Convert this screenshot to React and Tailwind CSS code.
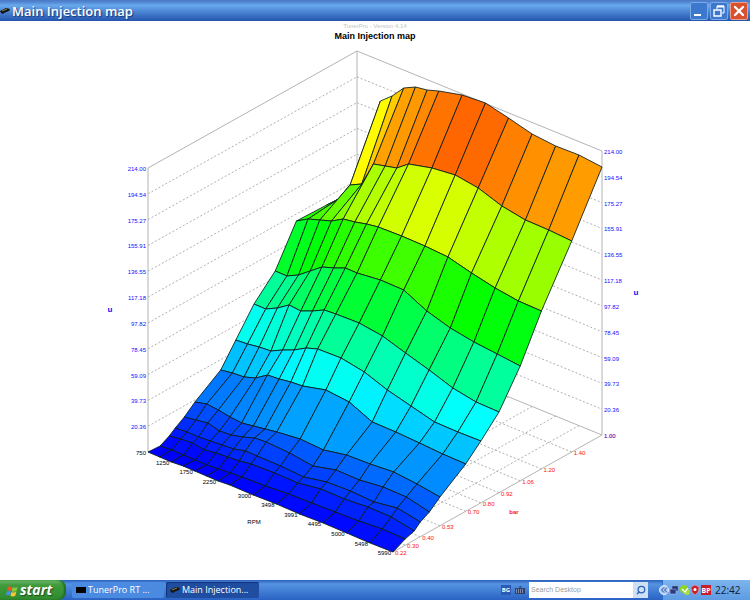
import { Search, X } from 'lucide-react'

const ORIGIN = { x: 148, y: 452 }
const RPM_AXIS = { x: 245, y: 100 }
const BAR_AXIS = { x: 209, y: -117 }
const Z_HEIGHT = 284

const RPM = [750, 1000, 1250, 1500, 1750, 2000, 2250, 2500, 3000, 3498, 3991, 4495, 5000, 5498, 5990]
const BAR = [0.22, 0.3, 0.36, 0.4, 0.46, 0.53, 0.7, 0.8, 0.92, 1.06, 1.2, 1.4, 1.6]

const RPM_LABELS = [750, 1250, 1750, 2250, 3000, 3498, 3991, 4495, 5000, 5498, 5990]
const BAR_LABELS = [0.22, 0.3, 0.4, 0.53, 0.7, 0.8, 0.92, 1.06, 1.2, 1.4, 1.6]
const Z_LABELS = ['1.00', '20.36', '39.73', '59.09', '78.45', '97.82', '117.18', '136.55', '155.91', '175.27', '194.54', '214.00']

// canvas y of every surface point, one row per BAR entry, one column per RPM entry
const SURFACE = [
  [452, 457, 462, 466, 471, 476, 481, 485, 495, 504, 514, 523, 533, 543, 552],
  [446, 450, 455, 460, 465, 469, 473, 477, 486, 494, 503, 512, 521, 529, 539],
  [436, 439, 443, 450, 453, 457, 461, 464, 473, 483, 489, 499, 507, 517, 531],
  [428, 432, 437, 441, 445, 449, 451, 456, 466, 477, 482, 491, 502, 508, 522],
  [417, 420, 423, 431, 435, 437, 438, 442, 453, 466, 470, 480, 487, 497, 512],
  [402, 404, 410, 417, 423, 426, 429, 432, 439, 450, 455, 464, 472, 484, 497],
  [370, 373, 377, 378, 375, 379, 382, 386, 390, 402, 422, 432, 443, 454, 464],
  [340, 344, 347, 351, 350, 350, 348, 349, 358, 372, 390, 406, 422, 432, 441],
  [304, 309, 308, 305, 311, 311, 310, 314, 323, 336, 353, 370, 388, 402, 412],
  [271, 276, 275, 271, 267, 268, 268, 273, 280, 290, 311, 328, 342, 354, 366],
  [221, 219, 220, 221, 219, 222, 224, 227, 236, 246, 257, 273, 288, 301, 311],
  [205, 199, 185, 184, 164, 166, 168, 164, 168, 175, 188, 206, 220, 230, 241],
  [195, 188, 101, 96, 88, 87, 90, 91, 95, 103, 118, 134, 146, 155, 167],
]

const rpmPart = (rpm) => (rpm - 750) / 5240
const barPart = (bar) => (bar - 0.22) / 1.38

function project(r, b, z = 0) {
  return {
    x: ORIGIN.x + RPM_AXIS.x * r + BAR_AXIS.x * b,
    y: ORIGIN.y + RPM_AXIS.y * r + BAR_AXIS.y * b - Z_HEIGHT * z,
  }
}

function surfacePoint(row, col) {
  const floor = project(rpmPart(RPM[col]), barPart(BAR[row]))
  const y = SURFACE[row][col]
  return { x: floor.x, y, z: (floor.y - y) / Z_HEIGHT }
}

function buildCells() {
  const cells = []
  for (let row = BAR.length - 2; row >= 0; row--) {
    for (let col = 0; col < RPM.length - 1; col++) {
      const corners = [
        surfacePoint(row, col),
        surfacePoint(row, col + 1),
        surfacePoint(row + 1, col + 1),
        surfacePoint(row + 1, col),
      ]
      const z = corners.reduce((sum, p) => sum + p.z, 0) / 4
      cells.push({
        key: `${row}-${col}`,
        points: corners.map((p) => `${p.x},${p.y}`).join(' '),
        fill: `hsl(${Math.round(240 * (1 - z))} 100% 50%)`,
      })
    }
  }
  return cells
}

const CELLS = buildCells()

function Segment({ from, to, dashed }) {
  return (
    <line
      x1={from.x}
      y1={from.y}
      x2={to.x}
      y2={to.y}
      stroke={dashed ? '#b0b0b0' : '#b4b4b4'}
      strokeWidth="1"
      strokeDasharray={dashed ? '2 2' : undefined}
    />
  )
}

function Frame() {
  return (
    <g>
      {Z_LABELS.slice(1, -1).map((label, i) => {
        const z = (i + 1) / 11
        return (
          <g key={label}>
            <Segment dashed from={project(0, 0, z)} to={project(0, 1, z)} />
            <Segment dashed from={project(0, 1, z)} to={project(1, 1, z)} />
          </g>
        )
      })}
      {BAR_LABELS.slice(1, -1).map((bar) => (
        <Segment key={bar} dashed from={project(1, barPart(bar))} to={project(0, barPart(bar))} />
      ))}
      {RPM_LABELS.slice(1, -1).map((rpm) => (
        <Segment key={rpm} dashed from={project(rpmPart(rpm), 1)} to={project(rpmPart(rpm), 0)} />
      ))}
      <Segment from={project(0, 0)} to={project(0, 0, 1)} />
      <Segment from={project(0, 1)} to={project(0, 1, 1)} />
      <Segment from={project(1, 1)} to={project(1, 1, 1)} />
      <Segment from={project(0, 0, 1)} to={project(0, 1, 1)} />
      <Segment from={project(0, 1, 1)} to={project(1, 1, 1)} />
      <Segment from={project(0, 1)} to={project(1, 1)} />
      <Segment from={project(1, 0)} to={project(1, 1)} />
    </g>
  )
}

function AxisLabels() {
  return (
    <g className="text-[6px]">
      <g className="fill-[#1010ff]">
        {Z_LABELS.map((label, i) => {
          const left = project(0, 0, i / 11)
          const right = project(1, 1, i / 11)
          return (
            <g key={label}>
              {i > 0 ? (
                <text x={left.x - 2} y={left.y + 3} textAnchor="end">{label}</text>
              ) : null}
              <text x={right.x + 2} y={right.y + 3}>{label}</text>
            </g>
          )
        })}
        <text x="110" y="312" textAnchor="middle" className="text-[8px] font-bold">u</text>
        <text x="636" y="295" textAnchor="middle" className="text-[8px] font-bold">u</text>
      </g>
      <g className="fill-black">
        {RPM_LABELS.map((rpm) => {
          const p = project(rpmPart(rpm), 0)
          return (
            <text key={rpm} x={p.x - 2} y={p.y + 3} textAnchor="end">{rpm}</text>
          )
        })}
        <text x="254" y="524" textAnchor="middle">RPM</text>
      </g>
      <g className="fill-[#ff1010]">
        {BAR_LABELS.map((bar) => {
          const p = project(1, barPart(bar))
          return (
            <text key={bar} x={p.x + 2} y={p.y + 3} className={bar === 1.6 ? 'opacity-50' : ''}>
              {bar.toFixed(2)}
            </text>
          )
        })}
        <text x="514" y="514" textAnchor="middle" className="font-bold">bar</text>
      </g>
    </g>
  )
}

function SurfaceChart() {
  return (
    <svg
      viewBox="0 21 750 559"
      className="block h-full w-full font-['Liberation_Sans',Arial,sans-serif]"
      role="img"
      aria-label="Main Injection map surface"
    >
      <text x="375" y="28" textAnchor="middle" className="fill-[#c4c4c4] text-[6px]">
        TunerPro - Version 4.14
      </text>
      <text x="375" y="39" textAnchor="middle" className="fill-black text-[9px] font-bold">
        Main Injection map
      </text>
      <Frame />
      <g stroke="#0a1a1a" strokeOpacity="0.85" strokeWidth="1" strokeLinejoin="round">
        {CELLS.map((cell) => (
          <polygon key={cell.key} points={cell.points} fill={cell.fill} />
        ))}
      </g>
      <AxisLabels />
    </svg>
  )
}

function ChipIcon() {
  return (
    <svg viewBox="0 0 10 8" className="h-2 w-2.5 shrink-0" aria-hidden="true">
      <path d="M0 4 L6 1 L10 2 L9 4 L4 6 L3 7 L1 6 Z" fill="#17150f" />
      <path d="M2 4 L7 2" stroke="#a89a6a" strokeWidth="0.8" />
    </svg>
  )
}

function TitleBar() {
  return (
    <header className="flex h-[21px] shrink-0 items-center gap-0.5 bg-linear-to-b from-[#4c7cc9] from-5% via-[#68a8ec] via-25% to-[#2554ae] pr-0.5">
      <ChipIcon />
      <h1 className="flex-1 truncate text-[13px] leading-5 font-semibold text-white [text-shadow:1px_1px_1px_#17397c]">
        Main Injection map
      </h1>
      <div className="flex gap-0.5">
        <button type="button" aria-label="Minimize" className="flex h-[18px] w-[18px] items-end rounded-xs border border-[#79a9e6] bg-[#3c78cd] p-[3px]">
          <span className="block h-0.5 w-[7px] bg-white" />
        </button>
        <button type="button" aria-label="Restore" className="flex h-[18px] w-[18px] items-center justify-center rounded-xs border border-[#79a9e6] bg-[#3c78cd]">
          <svg viewBox="0 0 12 12" className="h-3 w-3" fill="none" stroke="#fff" aria-hidden="true">
            <path d="M4 4V1H11V8H9" strokeWidth="1" />
            <path d="M4 1.5H11" strokeWidth="2" />
            <path d="M1 5H8V11H1Z" strokeWidth="1.4" />
          </svg>
        </button>
        <button type="button" aria-label="Close" className="flex h-[18px] w-[18px] items-center justify-center rounded-xs border border-[#e9a08c] bg-[#d9512f]">
          <X className="h-4 w-4 text-white" strokeWidth={3.5} />
        </button>
      </div>
    </header>
  )
}

function StartButton() {
  return (
    <button
      type="button"
      className="flex h-full w-[66px] items-center gap-0.5 rounded-r-lg bg-linear-to-b from-[#6fb96a] via-[#3f9b3c] via-25% to-[#2f8a2e] pl-1.5 shadow-[inset_-2px_0_2px_#1f6b22]"
    >
      <svg viewBox="0 0 12 12" className="mt-0.5 h-3 w-3" aria-hidden="true">
        <path d="M2 2Q4 0.5 6 2L5 6Q3 4.7 1 6Z" fill="#e8562a" />
        <path d="M6.6 2.3Q9 3.5 11.5 2L10.5 6Q8 7.5 5.6 6.2Z" fill="#8cc83c" />
        <path d="M0.8 6.6Q3 5.3 4.9 6.6L4 10.5Q2 9 0 10.5Z" fill="#4a8cf0" />
        <path d="M5.5 6.9Q8 8 10.3 6.7L9.3 10.7Q7 12 4.5 10.8Z" fill="#f6c93a" />
      </svg>
      <span className="text-sm leading-5 font-bold text-white italic [text-shadow:1px_1px_1px_#1d4d1d]">start</span>
    </button>
  )
}

function Tray() {
  return (
    <div className="flex h-full w-[88px] items-center border-l border-[#2a6fd0] bg-linear-to-b from-[#7db4ee] to-[#5e9be2]">
      <svg viewBox="0 0 42 12" className="-ml-1 h-3 w-[42px] shrink-0" aria-hidden="true">
        <circle cx="5" cy="6" r="4.5" fill="#a9cbf5" stroke="#e6f0fd" />
        <path d="M5 3.5L2.5 6L5 8.5M8 3.5L5.5 6L8 8.5" fill="none" stroke="#254f9c" />
        <path d="M13 2H19V7H13Z" fill="#23306e" stroke="#8fa4d6" strokeWidth="0.5" />
        <path d="M11 5H17V10H11Z" fill="#2d3d85" stroke="#b9c7e8" strokeWidth="0.5" />
        <circle cx="25" cy="5" r="4" fill="#8fd526" />
        <circle cx="28" cy="8" r="3" fill="#a6e03c" />
        <path d="M23 5L26 8L29 4" fill="none" stroke="#fff" strokeWidth="1.2" />
        <path d="M36 1L40 3Q40 9 36 11Q32 9 32 3Z" fill="#c9202b" stroke="#efb5b5" strokeWidth="0.5" />
        <circle cx="36" cy="5.5" r="1.5" fill="#fff" />
      </svg>
      <span className="flex h-[10px] w-[10px] shrink-0 items-center justify-center bg-[#c8202a] text-[7px] leading-none font-bold text-white">BP</span>
      <time className="ml-1 text-[10px] leading-4 text-[#101c34]">22:42</time>
    </div>
  )
}

function Taskbar() {
  return (
    <footer className="flex h-5 shrink-0 items-center bg-linear-to-b from-[#2c5fbc] via-[#5593e2] via-20% to-[#2a62c4]">
      <StartButton />
      <nav className="flex h-full flex-1 items-center gap-0.5 pl-1.5" aria-label="Open windows">
        <button type="button" className="flex h-4 w-[92px] items-center gap-0.5 rounded-xs bg-[#4a8ae0] pl-1 text-[9px] leading-4 text-white">
          <span className="block h-1.5 w-2.5 shrink-0 bg-black" />
          <span className="whitespace-nowrap">TunerPro RT ...</span>
        </button>
        <button type="button" aria-current="page" className="flex h-4 w-[93px] items-center gap-0.5 rounded-xs bg-[#1f4da0] pl-1 text-[9px] leading-4 text-white shadow-[inset_1px_1px_1px_#12357a]">
          <ChipIcon />
          <span className="whitespace-nowrap">Main Injection...</span>
        </button>
      </nav>
      <div className="flex items-center gap-1 pr-1">
        <span className="flex h-2.5 w-2.5 items-center justify-center bg-[#2b59b4] text-[6px] leading-none font-bold text-white">BG</span>
        <svg viewBox="0 0 10 8" className="h-2 w-2.5" aria-hidden="true">
          <path d="M0 2H10V8H0Z" fill="#33406a" />
          <path d="M1 4H9M1 6H9" stroke="#c9d4ea" strokeDasharray="1 1" />
          <path d="M5 2V0H7" stroke="#33406a" fill="none" />
        </svg>
      </div>
      <form className="mr-3.5 flex h-4 items-center" onSubmit={(e) => e.preventDefault()}>
        <input
          type="text"
          aria-label="Search Desktop"
          placeholder="Search Desktop"
          className="h-4 w-[104px] bg-white px-0.5 font-['Liberation_Sans',Arial,sans-serif] text-[7px] leading-4 text-gray-700 outline-none placeholder:text-[#9c9c9c]"
        />
        <button type="submit" aria-label="Search" className="flex h-4 w-[15px] items-center justify-center bg-[#cfe0f5]">
          <Search className="h-2.5 w-2.5 -scale-x-100 text-[#2a62b4]" strokeWidth={3} />
        </button>
      </form>
      <Tray />
    </footer>
  )
}

export default function App() {
  return (
    <div className="flex h-screen flex-col bg-white font-['Open_Sans','Noto_Sans',sans-serif]">
      <TitleBar />
      <main className="min-h-0 flex-1">
        <SurfaceChart />
      </main>
      <Taskbar />
    </div>
  )
}
